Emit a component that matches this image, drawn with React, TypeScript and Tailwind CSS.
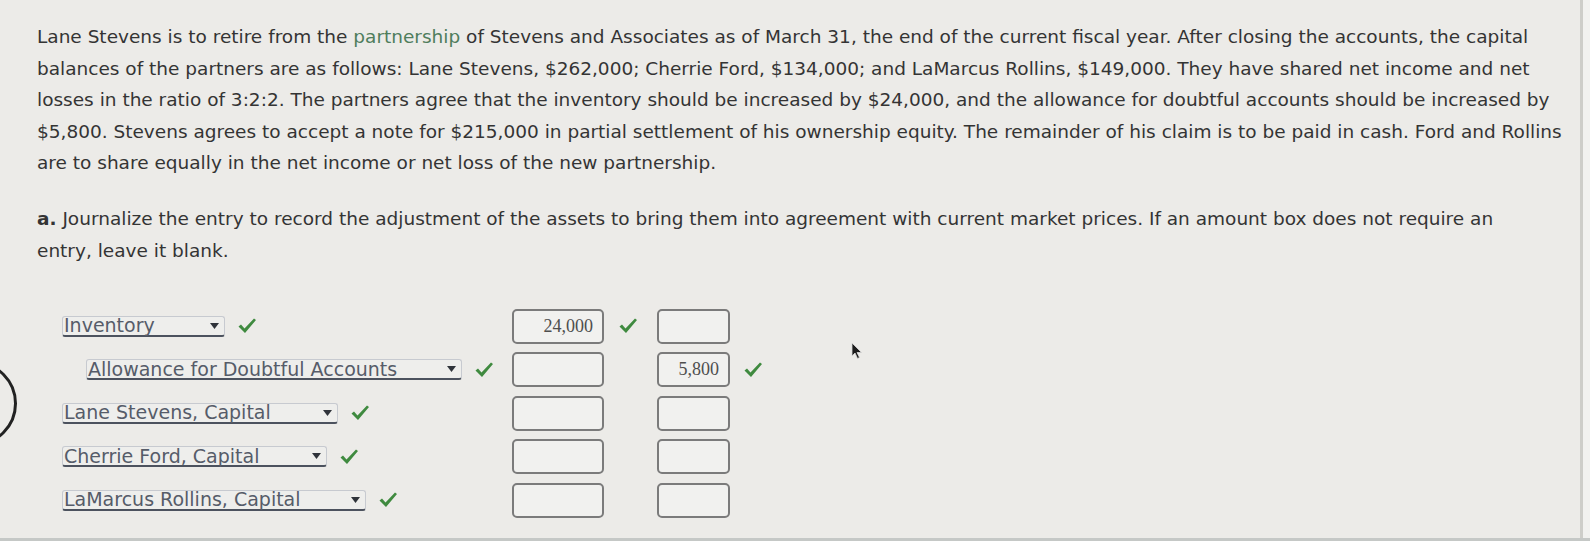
import React from 'react';

const problemLines = [
  <>Lane Stevens is to retire from the <span className="text-[#4f7d5c]">partnership</span> of Stevens and Associates as of March 31, the end of the current fiscal year. After closing the accounts, the capital</>,
  <>balances of the partners are as follows: Lane Stevens, $262,000; Cherrie Ford, $134,000; and LaMarcus Rollins, $149,000. They have shared net income and net</>,
  <>losses in the ratio of 3:2:2. The partners agree that the inventory should be increased by $24,000, and the allowance for doubtful accounts should be increased by</>,
  <>$5,800. Stevens agrees to accept a note for $215,000 in partial settlement of his ownership equity. The remainder of his claim is to be paid in cash. Ford and Rollins</>,
  <>are to share equally in the net income or net loss of the new partnership.</>,
];

const rows = [
  { account: 'Inventory', width: 'w-[163px]', indent: false, debit: '24,000', credit: '' },
  { account: 'Allowance for Doubtful Accounts', width: 'w-[376px]', indent: true, debit: '', credit: '5,800' },
  { account: 'Lane Stevens, Capital', width: 'w-[276px]', indent: false, debit: '', credit: '' },
  { account: 'Cherrie Ford, Capital', width: 'w-[265px]', indent: false, debit: '', credit: '' },
  { account: 'LaMarcus Rollins, Capital', width: 'w-[304px]', indent: false, debit: '', credit: '' },
];

function Check() {
  return (
    <svg width="20" height="18" viewBox="0 0 20 18" className="shrink-0">
      <path d="M1.5 9.5 L4 7.5 L7.5 11.5 L17 1.5 L19 3 L8 16 Z" fill="#3f8a3f" />
    </svg>
  );
}

function AccountSelect({ label, width }: { label: string; width: string }) {
  return (
    <div className={`${width} h-[21px] flex items-center justify-between rounded-[3px] border border-[#c7cad0] border-b-2 border-b-[#4c525e] bg-[#eeeeec]`}>
      <span className="pl-px text-[19px] leading-[19px] text-[#565c69] whitespace-nowrap">{label}</span>
      <svg width="9" height="6" viewBox="0 0 9 6" className="mr-[5px]">
        <path d="M0 0 H9 L4.5 6 Z" fill="#2f333a" />
      </svg>
    </div>
  );
}

function AmountBox({ value, width }: { value: string; width: string }) {
  return (
    <div className={`${width} h-[35px] flex items-center justify-end pr-[9px] rounded-[5px] border-2 border-[#7b7b7b] bg-[#f1f1ef] font-['Liberation_Serif',serif] text-[18px] text-[#4e4e4e]`}>
      {value}
    </div>
  );
}

export default function App() {
  return (
    <div className="relative w-[1590px] h-[541px] overflow-hidden bg-[#ecebe8] font-['DejaVu_Sans',sans-serif] text-[#343434]">
      <div className="flex h-[538px]">
        <div className="w-[1580px] pl-[37px] pt-[21px]">
          {/* Problem statement */}
          <div className="text-[18.5px] leading-[31.5px]">
            {problemLines.map((line, i) => (
              <div key={i} className="whitespace-nowrap">{line}</div>
            ))}
          </div>

          {/* Part a instructions */}
          <div className="mt-[24px] text-[18.5px] leading-[32px]">
            <div className="whitespace-nowrap">
              <span className="font-bold">a.</span> Journalize the entry to record the adjustment of the assets to bring them into agreement with current market prices. If an amount box does not require an
            </div>
            <div>entry, leave it blank.</div>
          </div>

          {/* Journal entry */}
          <div className="mt-[42px] ml-[25px] flex flex-col gap-[8.5px]">
            {rows.map((row) => (
              <div key={row.account} className="flex items-center h-[35px]">
                <div className={`w-[450px] flex items-center gap-[12px] ${row.indent ? 'pl-[24px]' : ''}`}>
                  <AccountSelect label={row.account} width={row.width} />
                  <Check />
                </div>
                <AmountBox value={row.debit} width="w-[92px]" />
                <div className="w-[53px] pl-[14px]">{row.debit && <Check />}</div>
                <AmountBox value={row.credit} width="w-[73px]" />
                <div className="pl-[13px]">{row.credit && <Check />}</div>
              </div>
            ))}
          </div>
        </div>
        <div className="w-[3px] bg-[#cdcdc9]" />
        <div className="flex-1 bg-[#f1f1ef]" />
      </div>
      <div className="h-[3px] bg-[#c5c8c6]" />

      {/* partial circle at left edge */}
      <div className="absolute left-[-68px] top-[361px] w-[85px] h-[85px] rounded-full border-[3px] border-[#222]" />

      {/* mouse pointer */}
      <svg className="absolute left-[851px] top-[342px]" width="12" height="18" viewBox="0 0 12 18">
        <path d="M1 1 L1 14 L4 11 L6.5 16.5 L8.5 15.5 L6 10.5 L10.5 10.5 Z" fill="#1c1c1c" stroke="#d8d8d8" strokeWidth="0.8" />
      </svg>
    </div>
  );
}
